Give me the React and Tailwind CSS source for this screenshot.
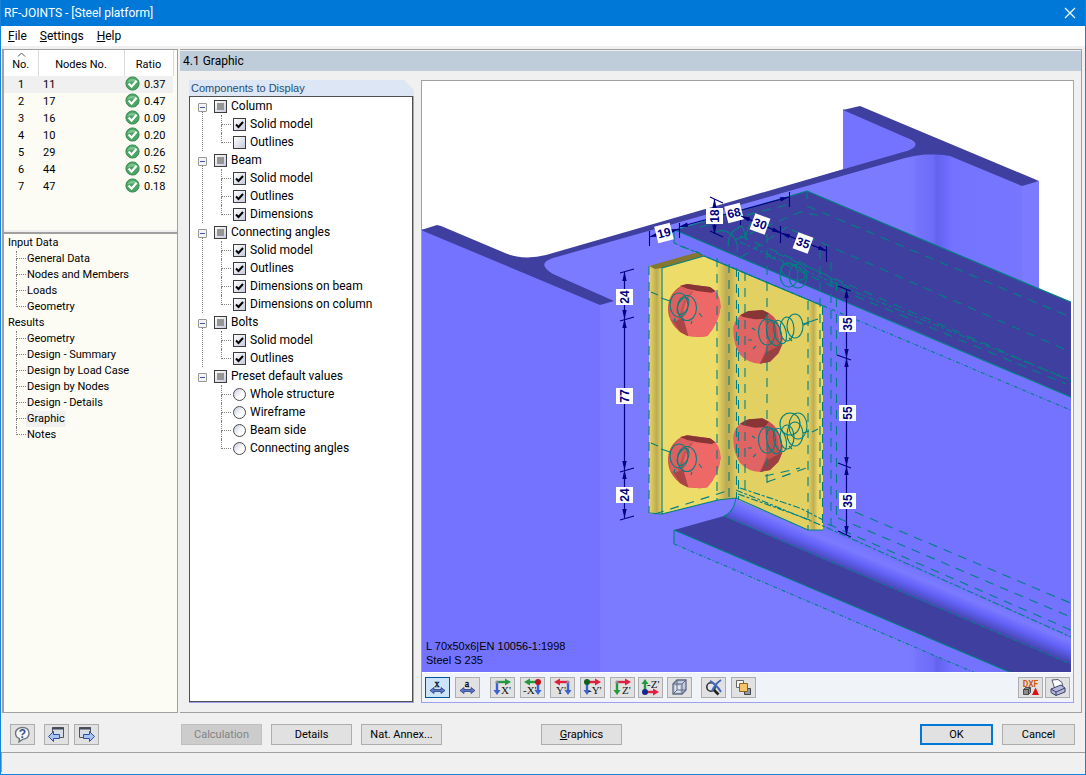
import React, { useState } from 'react';

const nodes = [
  { no: 1, node: 11, ratio: '0.37' },
  { no: 2, node: 17, ratio: '0.47' },
  { no: 3, node: 16, ratio: '0.09' },
  { no: 4, node: 10, ratio: '0.20' },
  { no: 5, node: 29, ratio: '0.26' },
  { no: 6, node: 44, ratio: '0.52' },
  { no: 7, node: 47, ratio: '0.18' },
];

const navigation = [
  { title: 'Input Data', items: ['General Data', 'Nodes and Members', 'Loads', 'Geometry'] },
  {
    title: 'Results',
    items: ['Geometry', 'Design - Summary', 'Design by Load Case', 'Design by Nodes', 'Design - Details', 'Graphic', 'Notes'],
  },
];

const components = [
  { title: 'Column', items: [['Solid model', true], ['Outlines', false]] },
  { title: 'Beam', items: [['Solid model', true], ['Outlines', true], ['Dimensions', true]] },
  {
    title: 'Connecting angles',
    items: [['Solid model', true], ['Outlines', true], ['Dimensions on beam', true], ['Dimensions on column', true]],
  },
  { title: 'Bolts', items: [['Solid model', true], ['Outlines', true]] },
  {
    title: 'Preset default values',
    radio: true,
    items: [['Whole structure'], ['Wireframe'], ['Beam side'], ['Connecting angles']],
  },
];

function OkMark() {
  return (
    <svg width="15" height="15" viewBox="0 0 15 15" className="block">
      <circle cx="7.5" cy="7.5" r="6.6" fill="#4aa564" stroke="#3c8a54" />
      <path d="M2.2 6.5a5.6 5.6 0 0 1 10.6 0q-5 -2 -10.6 0z" fill="#7cc48f" />
      <path d="M3.6 7.6l3 3.1 5-6" fill="none" stroke="#fff" strokeWidth="2.2" />
    </svg>
  );
}

function NodeTable() {
  return (
    <div className="h-[180px] bg-[#fcfcf4]">
      <table className="w-[169px] table-fixed border-collapse text-[11px]">
        <colgroup>
          <col className="w-[34px]" />
          <col className="w-[86px]" />
          <col className="w-[49px]" />
        </colgroup>
        <thead>
          <tr className="h-[26px] bg-white">
            <th className="relative border-r border-[#dcdcdc] p-0 pt-1 text-center font-normal">
              <svg className="absolute top-[2px] left-[13px]" width="9" height="5" viewBox="0 0 9 5">
                <path d="M1 4.5l3.5-3.5L8 4.5" fill="none" stroke="#555" />
              </svg>
              No.
            </th>
            <th className="border-r border-[#dcdcdc] p-0 pt-1 text-center font-normal">Nodes No.</th>
            <th className="border-r border-[#dcdcdc] p-0 pt-1 text-center font-normal">Ratio</th>
          </tr>
        </thead>
        <tbody>
          {nodes.map((n) => (
            <tr key={n.no} className="h-[17px] leading-4 first:bg-[#f0f0f0]">
              <td className="p-0 pt-px text-center">{n.no}</td>
              <td className="p-0 pt-px pl-[5px]">{n.node}</td>
              <td className="p-0">
                <div className="flex gap-1 pl-px">
                  <OkMark />
                  <span className="pt-px">{n.ratio}</span>
                </div>
              </td>
            </tr>
          ))}
        </tbody>
      </table>
    </div>
  );
}

function Navigation() {
  const [active, setActive] = useState('Results/Graphic');
  return (
    <nav className="flex-1 border-t-2 border-[#a0a0a0] bg-[#fcfcf4] pt-px text-[11px] leading-4">
      {navigation.map((group) => (
        <div key={group.title}>
          <div className="pl-1">{group.title}</div>
          <ul>
            {group.items.map((item, i) => {
              const id = group.title + '/' + item;
              return (
                <li key={id} className="flex h-4 pl-3">
                  <Branch last={i === group.items.length - 1} half="h-2" />
                  <button
                    onClick={() => setActive(id)}
                    className={'px-px leading-4 ' + (active === id ? 'bg-[#f0f0f0]' : '')}
                  >
                    {item}
                  </button>
                </li>
              );
            })}
          </ul>
        </div>
      ))}
    </nav>
  );
}

// dotted connector in front of a tree entry
function Branch({ last, half }) {
  return (
    <span className="flex w-[10px] flex-col">
      <span className={'border-b border-l border-dotted border-[#808080] ' + half} />
      {!last && <span className="flex-1 border-l border-dotted border-[#808080]" />}
    </span>
  );
}

const boxClass =
  'col-start-1 row-start-1 size-[13px] appearance-none border border-[#3c3c3c] bg-linear-to-br from-white to-[#c6cbdc]';

function Option({ group, label, checked, radio }) {
  if (radio) {
    return (
      <label className="flex items-center gap-1">
        <input
          type="radio"
          name={group}
          className="size-[13px] appearance-none rounded-full border border-[#4a4a4a] bg-linear-to-br from-[#c6cbdc] to-white to-60% checked:border-4"
        />
        {label}
      </label>
    );
  }
  return (
    <label className="flex items-center gap-1">
      <span className="grid">
        <input type="checkbox" defaultChecked={checked} className={'peer ' + boxClass} />
        <svg
          className="pointer-events-none invisible col-start-1 row-start-1 peer-checked:visible"
          width="13"
          height="13"
          viewBox="0 0 13 13"
        >
          <path d="M3 6.5L5.5 9 10 4" fill="none" stroke="#000" strokeWidth="2" />
        </svg>
      </span>
      {label}
    </label>
  );
}

function ComponentGroup({ group, last }) {
  const [open, setOpen] = useState(true);
  return (
    <li className="flex">
      <div className="flex w-6 flex-col pl-2">
        <button
          aria-label={'Toggle ' + group.title}
          onClick={() => setOpen(!open)}
          className="mt-[6px] flex size-[9px] items-center justify-center rounded-[1px] border border-[#969696] bg-[#f4f4f4]"
        >
          <span className="h-px w-[5px] bg-[#3a56a8]" />
        </button>
        {!last && <span className="ml-1 flex-1 border-l border-dotted border-[#808080]" />}
      </div>
      <div>
        <label className="flex h-[18px] items-center gap-1">
          <span className="grid">
            <input type="checkbox" defaultChecked className={'peer ' + boxClass} />
            <span className="pointer-events-none invisible col-start-1 row-start-1 m-[3px] bg-[#969696] peer-checked:visible" />
          </span>
          {group.title}
        </label>
        {open && (
          <ul className="pl-[7px]">
            {group.items.map(([label, checked], i) => (
              <li key={label} className="flex h-[18px] gap-[2px]">
                <Branch last={i === group.items.length - 1} half="h-[10px]" />
                <Option group={group.title} label={label} checked={checked} radio={group.radio} />
              </li>
            ))}
          </ul>
        )}
      </div>
    </li>
  );
}

function ComponentsPanel() {
  return (
    <section className="flex w-[225px] shrink-0 flex-col">
      <h2 className="h-4 bg-[#dce6f4] pl-[2px] font-['Liberation_Sans',sans-serif] text-[11px] leading-4 text-[#1f4e79] [clip-path:polygon(0_0,calc(100%-10px)_0,100%_10px,100%_100%,0_100%)]">
        Components to Display
      </h2>
      <div className="flex flex-1 border-r border-b border-[#a0a0f0]">
        <ul className="flex-1 border border-[#505050] bg-white text-xs">
          {components.map((g, i) => (
            <ComponentGroup key={g.title} group={g} last={i === components.length - 1} />
          ))}
        </ul>
      </div>
    </section>
  );
}

function Arrow({ x, y, angle }) {
  return <path d="M0 0L-9 -2.2V2.2z" fill="#000080" transform={`translate(${x} ${y}) rotate(${angle})`} />;
}

// one dimension: line between two points, arrows at both ends, value on a white tag
function Dimension({ from, to, at, angle, value }) {
  const dir = (Math.atan2(to[1] - from[1], to[0] - from[0]) * 180) / Math.PI;
  return (
    <g>
      <path d={`M${from}L${to}`} stroke="#000080" strokeWidth="1.2" />
      <Arrow x={to[0]} y={to[1]} angle={dir} />
      <Arrow x={from[0]} y={from[1]} angle={dir + 180} />
      <g transform={`translate(${at}) rotate(${angle})`}>
        <rect x="-8" y="-8.5" width="16" height="17" fill="#fff" />
        <text
          y="4"
          textAnchor="middle"
          fill="#000080"
          fontFamily="'Liberation Sans', sans-serif"
          fontWeight="bold"
          fontSize="12"
        >
          {value}
        </text>
      </g>
    </g>
  );
}

const dimensions = [
  { from: [649, 237], to: [679, 229], at: [664, 233], angle: -14, value: 19 },
  { from: [679, 227], to: [789, 197], at: [734, 213], angle: -14, value: 68 },
  { from: [714.5, 199], to: [714.5, 234], at: [714.5, 216], angle: -90, value: 18 },
  { from: [741, 216], to: [781, 233], at: [760, 224], angle: 20, value: 30 },
  { from: [781, 233], to: [827, 251], at: [803, 243], angle: 20, value: 35 },
  { from: [624.5, 272], to: [624.5, 319], at: [624.5, 297], angle: -90, value: 24 },
  { from: [624.5, 319], to: [624.5, 470], at: [624.5, 396], angle: -90, value: 77 },
  { from: [624.5, 470], to: [624.5, 518], at: [624.5, 495], angle: -90, value: 24 },
  { from: [846.5, 289], to: [846.5, 358], at: [847.5, 324], angle: -90, value: 35 },
  { from: [846.5, 358], to: [846.5, 466], at: [847.5, 413], angle: -90, value: 55 },
  { from: [846.5, 466], to: [846.5, 535], at: [847.5, 501], angle: -90, value: 35 },
];

function LeftBolt() {
  return (
    <g>
      <path d="M204 352Q206 320 225 302 240 286 262 282L300 287 330 291Q356 306 362 350 356 400 322 438L300 441 262 438Q232 424 218 402 203 380 204 352z" fill="#c95353" />
      <path d="M245 290L262 286 278 300 250 335 232 392 212 388 206 345 226 306z" fill="#dd6060" />
      <path d="M262 297L335 306 347 303Q362 322 362 350 356 400 322 438L300 441 265 438Q248 408 250 375 250 335 280 305z" fill="#ee6868" />
      <path d="M240 287L262 282 300 287 330 291 347 303 335 308 292 303 262 296z" fill="#873535" />
      <path d="M222 395L250 385 265 438 240 426z" fill="#a94545" />
    </g>
  );
}

function RightBolt() {
  return (
    <g>
      <path d="M400 412Q404 384 435 366L485 360 508 370Q538 388 547 440 548 470 535 490L510 515 480 521Q445 520 420 494 398 462 400 412z" fill="#e06464" />
      <path d="M494 388L508 371Q538 388 547 440L547 462 535 490 510 515 480 521Q500 480 502 450z" fill="#c45050" />
      <path d="M497 488L547 462 535 490 510 515 480 521z" fill="#9a4040" />
      <path d="M420 376L445 363 488 360 507 370 494 387 465 388 430 381z" fill="#873535" />
      <path d="M518 382Q540 400 547 455L538 465Q536 420 518 382z" fill="#d96060" />
    </g>
  );
}

function JointModel() {
  return (
    <svg
      viewBox="422 81 650 591"
      preserveAspectRatio="xMinYMin slice"
      className="block min-h-0 w-full flex-1 bg-white"
      role="img"
      aria-label="Steel joint model"
    >
      <defs>
        <linearGradient id="columnFillet" gradientUnits="userSpaceOnUse" x1="905" y1="0" x2="1022" y2="0">
          <stop offset="0" stopColor="#7b7bff" />
          <stop offset=".07" stopColor="#7a7aff" />
          <stop offset=".1" stopColor="#7474ff" />
          <stop offset=".24" stopColor="#6c6cf8" />
          <stop offset=".27" stopColor="#6262ec" />
          <stop offset=".34" stopColor="#6a6afa" />
          <stop offset=".41" stopColor="#7373ff" />
          <stop offset="1" stopColor="#7676ff" />
        </linearGradient>
        <linearGradient id="beamFillet" gradientUnits="userSpaceOnUse" x1="820" y1="530" x2="810" y2="554">
          <stop offset="0" stopColor="#7676ff" />
          <stop offset=".25" stopColor="#7b7bff" />
          <stop offset=".6" stopColor="#6262f8" />
          <stop offset="1" stopColor="#4747b4" />
        </linearGradient>
        <linearGradient id="toe" gradientUnits="userSpaceOnUse" x1="649" y1="0" x2="663" y2="0">
          <stop offset="0" stopColor="#e8d666" />
          <stop offset=".55" stopColor="#bcab52" />
          <stop offset="1" stopColor="#eedc68" />
        </linearGradient>
        <linearGradient id="heel" gradientUnits="userSpaceOnUse" x1="716" y1="0" x2="737" y2="0">
          <stop offset="0" stopColor="#eedc68" />
          <stop offset=".5" stopColor="#bcab52" />
          <stop offset=".75" stopColor="#c9b758" />
          <stop offset="1" stopColor="#e0ce62" />
        </linearGradient>
        <linearGradient id="edge" gradientUnits="userSpaceOnUse" x1="808" y1="0" x2="824" y2="0">
          <stop offset="0" stopColor="#e2d063" />
          <stop offset=".35" stopColor="#bfae54" />
          <stop offset=".6" stopColor="#e8d666" />
          <stop offset="1" stopColor="#eedc68" />
        </linearGradient>
      </defs>

      {/* column */}
      <path d="M843 109L905 136 918 145 912 153 843 172z" fill="#7373ff" />
      <path d="M542 259L905 151 950 153 1022 184V690H542z" fill="#7b7bff" />
      <path d="M905 150H950L1022 184V300H905z" fill="url(#columnFillet)" />
      <path d="M1022 184L1039 181V310H1022z" fill="#7b7bff" />
      <path d="M422 229L600 304V690H422z" fill="#7373ff" />
      <path
        d="M421 230L437 225 441 226 505 253Q514 257 527 257.500Q537 257 546 255L740 199 903 152Q918 148 915 143Q912 140 905 137L843 110 860 106 1039 181 1022 186 950 156Q944 154.500 936 154.500H925Q916 155 905 158L740 205 553 258Q543 261 544.500 266Q546 270 553 274L614 301 600 305z"
        fill="#3f3fa0"
      />
      <path d="M905 600H1022V690H905z" fill="url(#columnFillet)" />

      {/* beam web and flanges */}
      <path d="M674 230L1080 401V642L823 535V306L674 243z" fill="#7373ff" />
      <path d="M675 230L807 191 1080 306V401L913 330 740 258z" fill="#3f3fa0" />
      <path d="M674 530L820 592 1050 690H1015L674 544z" fill="#7373ff" />
      <path d="M674 530L724 516 820 557 1080 667V690H1052L820 592z" fill="#3f3fa0" />
      <path d="M736 498L823 530 1080 641V668L820 558 724 516Q734 512 736 498z" fill="url(#beamFillet)" />

      {/* angle */}
      <path d="M649 266L703 256 736 270V498L718 500 662 514 649 513z" fill="#eedc68" />
      <path d="M731 268L823 306V530H808L736 499z" fill="#e2d063" />
      <path d="M649 267H663V514H649z" fill="url(#toe)" />
      <path d="M716 261L737 270V498L718 500H716z" fill="url(#heel)" />
      <path d="M808 300L823 306V530H808z" fill="url(#edge)" />
      <path d="M649 266L698 252 704 256 662 268 655 269z" fill="#857632" />

      <g transform="translate(600 190) scale(.3333)">
        <LeftBolt />
        <g transform="translate(0 454)">
          <LeftBolt />
        </g>
        <RightBolt />
        <g transform="translate(0 325)">
          <RightBolt />
        </g>
      </g>

      {/* outlines */}
      <g fill="none" stroke="#008080" strokeWidth="1.1">
        <path d="M675 230L807 191 1080 306M675 230L1080 401M674 530L1052 690M662 268L704 256 823 306M649 513L662 514 718 500 736 498 808 530H823M724 516Q734 512 736 498M674 530V544M674 230V243M662 268V514M807 191V199" />
        <path d="M674 243L1080 414M674 544L1015 690M724 516L1080 668" strokeDasharray="4 2 1 2" />
        <path
          d="M649 266V513M717 258V500M729 264V498M736.500 268V498M738.500 272V500M745 272V490M767 234V490M808 301V530M822.500 306V530M820 250V500M831 262V526M836.500 282V522"
          strokeDasharray="9 7"
        />
        <path
          d="M680 246L700 253M807 206L1080 321M792 230L820 242 1080 356M776 253L838 280 1080 385M768 256L836 288 1066 384M740 236L800 262 850 288M700 227L790 204M735 240L800 212 822 216M740 258L790 225M655 514L730 490M767 482L812 466M765 476L800 468M855 512L1080 607M838 518L1080 621M828 524L1080 634"
          strokeDasharray="9 7"
        />
        <path d="M736 490L823 526 1080 641M738 494L810 520M740 488L800 508 823 520" strokeDasharray="7 2 3 2" />
        <path d="M740 242L776 258 850 290 1080 384" strokeDasharray="6 2 3 3" />
        <path d="M651 292L658 295M661 298L670 301M651 443L658 446M661 449L670 452M803 324L818 319M812 432L818 429M728 247Q728 232 738 228Q744 222 745 238M716 232Q724 228 733 236Q739 244 737 252M746 240Q746 222 760 218" />
        {[0, 151].map((y) => (
          <g key={y}>
            <ellipse cx="679" cy={305 + y} rx="9" ry="12" />
            <ellipse cx="687" cy={308 + y} rx="9.500" ry="12.500" />
            <ellipse cx="683" cy={306 + y} rx="5" ry="9" transform={`rotate(25 683 ${306 + y})`} />
            <path d={`M699 ${313 + y}l3 4M692 ${321 + y}l-1 3M675 ${318 + y}l-1 4`} />
          </g>
        ))}
        {[0, 108].map((y) => (
          <g key={y}>
            <ellipse cx="767" cy={332 + y} rx="8.500" ry="13" />
            <ellipse cx="774" cy={333 + y} rx="7" ry="13" transform={`rotate(-15 774 ${333 + y})`} />
            <ellipse cx="780" cy={332 + y} rx="6" ry="12" transform={`rotate(-15 780 ${332 + y})`} />
            <ellipse cx="787" cy={329 + y} rx="7" ry="12" />
            <ellipse cx="795" cy={326 + y} rx="8" ry="12" />
            <path d={`M748 ${340 + y}h4M752 ${328 + y}l3 2M753 ${349 + y}l3 -3M789 ${338 + y}l3 3M803 ${325 + y}l6 -2`} />
          </g>
        ))}
        <ellipse cx="789" cy="275" rx="9" ry="12" />
        <ellipse cx="798" cy="276" rx="9" ry="12" />
        <ellipse cx="793" cy="272" rx="13" ry="7" transform="rotate(24 793 272)" />
        <ellipse cx="790" cy="424" rx="10" ry="11" />
        <ellipse cx="798" cy="426" rx="9" ry="13" />
      </g>

      {/* dimensions */}
      <path
        d="M649.500 231V246M679.500 223V238M789.500 192V207M740.500 218V225M780.500 226V243M826.500 246V262M710 197L723 203M710 231L723 237M620 273L634 269M620 321L634 317M620 472L634 468M620 520L634 516M838 286L851 291M837 355L851 360M838 463L851 468M838 531L851 537"
        fill="none"
        stroke="#000080"
        strokeWidth="1.100"
      />
      {dimensions.map((d, i) => (
        <Dimension key={i} {...d} />
      ))}
      <g fontFamily="'Liberation Sans', sans-serif" fontSize="11">
        <text x="426" y="650">L 70x50x6|EN 10056-1:1998</text>
        <text x="426" y="664">Steel S 235</text>
      </g>
    </svg>
  );
}

const RED = '#e0203c';
const GREEN = '#1f9a3c';
const BLUE = '#3a62d0';

// pair of axes: h = horizontal arrow, v = vertical arrow, starting at the corner x, y
function AxisIcon({ x, y, h, v, hColor, vColor, dot, label, labelX, labelY }) {
  return (
    <svg width="19" height="19" viewBox="0 -1 19 19">
      <path d={`M${x} ${y}h${h * 8}`} stroke={hColor} strokeWidth="2.4" />
      <path d={`M${x + h * 8} ${y - 3.5}v7l${h * 6} -3.5z`} fill={hColor} />
      <path d={`M${x} ${y}v${v * 8}`} stroke={vColor} strokeWidth="2.4" />
      <path d={`M${x - 3.5} ${y + v * 8}h7l-3.5 ${v * 5}z`} fill={vColor} />
      <circle cx={x} cy={y} r={dot ? 3 : 1.6} fill={dot || '#8a8aa0'} />
      <text x={labelX} y={labelY} fontFamily="'Liberation Serif', serif" fontSize="11" fill="#111">
        {label}
      </text>
    </svg>
  );
}

function DimIcon({ letter }) {
  return (
    <svg width="19" height="19" viewBox="0 0 19 19">
      <text x="9" y="9" textAnchor="middle" fontFamily="'Liberation Serif', serif" fontSize="10" stroke="#000" strokeWidth=".3">
        {letter}
      </text>
      <path d="M2 12.500l4-3v2h7v-2l4 3-4 3v-2H6v2z" fill="#5a78c8" stroke="#2c4080" strokeWidth=".8" />
    </svg>
  );
}

const views = [
  { label: "X'", x: 4, y: 3, h: 1, v: 1, hColor: GREEN, vColor: BLUE, labelX: 8, labelY: 15 },
  { label: "-X'", x: 15, y: 3, h: -1, v: 1, hColor: GREEN, vColor: BLUE, dot: '#c01020', labelX: 0, labelY: 15 },
  { label: "Y'", x: 15, y: 3, h: -1, v: 1, hColor: RED, vColor: BLUE, labelX: 3, labelY: 15 },
  { label: "-Y'", x: 4, y: 3, h: 1, v: 1, hColor: RED, vColor: BLUE, dot: '#0c6020', labelX: 5, labelY: 15 },
  { label: "Z'", x: 4, y: 3, h: 1, v: 1, hColor: RED, vColor: GREEN, labelX: 9, labelY: 15 },
];

const bottomView = { label: "-Z'", x: 4, y: 13, h: 1, v: -1, hColor: RED, vColor: GREEN, dot: '#102890', labelX: 6, labelY: 9 };

function ToolButton({ label, pressed, children }) {
  return (
    <button
      aria-label={label}
      className={
        'flex h-[21px] w-[25px] items-center justify-center border ' +
        (pressed ? 'border-[#005499] bg-[#cce4f7]' : 'border-[#adadad] bg-[#e1e1e1]')
      }
    >
      {children}
    </button>
  );
}

function ViewerToolbar() {
  return (
    <div className="flex h-[30px] items-center border-t border-white bg-[#f0f4f9] px-[3px]">
      <div className="flex gap-[5px]">
        <ToolButton label="Show dimensions" pressed>
          <DimIcon letter="x" />
        </ToolButton>
        <ToolButton label="Show names">
          <DimIcon letter="a" />
        </ToolButton>
      </div>
      <div className="ml-[10px] flex gap-[5px]">
        {views.map((v) => (
          <ToolButton key={v.label} label={'View ' + v.label}>
            <AxisIcon {...v} />
          </ToolButton>
        ))}
      </div>
      <div className="ml-[3px] flex gap-1">
        <ToolButton label="View -Z'">
          <AxisIcon {...bottomView} />
        </ToolButton>
        <ToolButton label="Isometric view">
          <svg width="19" height="17" viewBox="0 0 19 17">
            <path d="M3 5l4-4h9v10l-4 4H3z" fill="#c4ccdc" stroke="#5c6884" strokeWidth="1.300" />
            <path d="M5 7h5v6H5z" fill="#e4e8f0" />
            <path d="M3 5h9v10M12 5l4-4M7 1v10h9M3 15l4-4" fill="none" stroke="#5c6884" />
          </svg>
        </ToolButton>
      </div>
      <div className="ml-[9px] flex gap-[5px]">
        <ToolButton label="Zoom off">
          <svg width="19" height="17" viewBox="0 0 19 17">
            <circle cx="7" cy="8" r="4.200" fill="#dfe6ee" stroke="#333" strokeWidth="1.600" />
            <path d="M10 11l4.500 4.500" stroke="#222" strokeWidth="2.600" />
            <path d="M6 2Q12 5 17 13M17 1Q11 5 8 12" fill="none" stroke="#4468b8" strokeWidth="2" />
          </svg>
        </ToolButton>
        <ToolButton label="Layers">
          <svg width="19" height="17" viewBox="0 0 19 17">
            <path d="M2.500 1.500h7v7h-7z" fill="#f4f4f4" stroke="#666" />
            <path d="M10.500 9.500h6v6h-6z" fill="#8a96b4" stroke="#444" />
            <path d="M5.500 4.500h8v8h-8z" fill="#f4c468" stroke="#8a6420" />
          </svg>
        </ToolButton>
      </div>
      <div className="ml-auto flex gap-[2px]">
        <ToolButton label="Export DXF">
          <svg width="19" height="17" viewBox="0 0 19 17">
            <text x="9.500" y="7.500" textAnchor="middle" fontFamily="Roboto, sans-serif" fontWeight="bold" fontSize="8.500" fill="#d05a10">
              DXF
            </text>
            <path d="M2.500 10.500l2-2h5v5l-2 2h-5z" fill="#8c8c8c" stroke="#505050" />
            <path d="M2.500 10.500h5v5M7.500 10.500l2-2" fill="none" stroke="#404040" />
            <path d="M11 16l3.500-7.500L18 16z" fill="#e01010" />
          </svg>
        </ToolButton>
        <ToolButton label="Print">
          <svg width="19" height="17" viewBox="0 0 19 17">
            <path d="M4 1l6-.5 4 3 1 5-8 2z" fill="#fff" stroke="#555a70" />
            <path d="M3 10l10-4 4 3v4l-9 3.500-5-3z" fill="#b4b8dc" stroke="#3c4068" />
            <path d="M3 10l5 3 9-4M8 13v3.500" fill="none" stroke="#3c4068" />
          </svg>
        </ToolButton>
      </div>
    </div>
  );
}

function Viewer() {
  return (
    <section className="flex min-w-0 flex-1 flex-col border border-t-[#a0a0a0] border-r-[#a0a0f0] border-b-[#a0a0f0] border-l-[#a0a0a0] bg-white">
      <div className="flex min-h-0 flex-1 flex-col pr-[2px]">
        <JointModel />
      </div>
      <ViewerToolbar />
    </section>
  );
}

function ArrowWindow({ back }) {
  return (
    <svg width="19" height="17" viewBox="0 0 19 17">
      <path d={back ? 'M5.500 1.500h11v10h-11z' : 'M2.500 1.500h11v10h-11z'} fill="#d8dce4" stroke="#555" />
      <path d={back ? 'M5 2.500h12' : 'M2 2.500h12'} stroke="#444a5c" strokeWidth="2" />
      <path
        d={back ? 'M1.500 10.500l5-5v3h6v4h-6v3z' : 'M17.500 10.500l-5-5v3h-6v4h6v3z'}
        fill="#a8c4f0"
        stroke="#2c4fa0"
      />
    </svg>
  );
}

const wideButton = 'h-[21px] w-[81px] border border-[#adadad] bg-[#e1e1e1] pt-px';

function Footer() {
  return (
    <footer className="flex h-[39px] items-center pt-1 pr-[10px] pl-[9px] text-[11px]">
      <div className="flex w-[171px]">
        <ToolButton label="Help">
          <svg width="19" height="17" viewBox="0 0 19 17">
            <path d="M9.500 1.500c4 0 6.500 2.300 6.500 5.800 0 3.400-2.500 5.700-6 5.800L6 15.800l.5-3.200C4 11.800 2.500 10 2.500 7.300c0-3.500 3-5.800 7-5.800z" fill="#f4f6fa" stroke="#70757f" strokeWidth="1.400" />
            <text x="9.500" y="11.500" textAnchor="middle" fontFamily="'Liberation Sans', sans-serif" fontWeight="bold" fontSize="12" fill="#34508c">
              ?
            </text>
          </svg>
        </ToolButton>
        <div className="ml-[9px] flex gap-[5px]">
          <ToolButton label="Previous">
            <ArrowWindow back />
          </ToolButton>
          <ToolButton label="Next">
            <ArrowWindow />
          </ToolButton>
        </div>
      </div>
      <div className="flex gap-[9px]">
        <button disabled className="h-[21px] w-[81px] border border-[#bfbfbf] bg-[#cccccc] pt-px text-[#838383]">
          Calculation
        </button>
        <button className={wideButton}>Details</button>
        <button className={wideButton}>Nat. Annex...</button>
      </div>
      <button className={'ml-[99px] ' + wideButton}>
        <u>G</u>raphics
      </button>
      <div className="ml-auto flex gap-[9px]">
        <button className="h-[21px] w-[73px] border-2 border-[#0078d7] bg-[#e1e1e1] pt-px">OK</button>
        <button className="h-[21px] w-[73px] border border-[#adadad] bg-[#e1e1e1] pt-px">Cancel</button>
      </div>
    </footer>
  );
}

export default function App() {
  return (
    <div className="flex min-h-screen flex-col border border-t-0 border-[#1883d7] bg-[#f0f0f0] font-[Roboto,sans-serif] text-black">
      <header className="flex h-[26px] items-center justify-between bg-[#0078d7] pr-[9px] pl-[3px] text-xs text-white">
        <h1>RF-JOINTS - [Steel platform]</h1>
        <button aria-label="Close">
          <svg width="12" height="12" viewBox="0 0 12 12">
            <path d="M1 1l10 10M11 1L1 11" stroke="#fff" strokeWidth="1.200" />
          </svg>
        </button>
      </header>
      <nav className="flex h-5 items-center gap-[13px] bg-white pl-[7px] text-xs">
        <a href="#file"><u>F</u>ile</a>
        <a href="#settings"><u>S</u>ettings</a>
        <a href="#help"><u>H</u>elp</a>
      </nav>

      <div className="mt-[3px] flex flex-1 gap-[2px] pr-[3px] pl-px">
        <aside className="flex w-44 shrink-0 flex-col gap-[2px] border border-l-2 border-[#a0a0a0]">
          <NodeTable />
          <Navigation />
        </aside>
        <main className="flex min-w-0 flex-1 flex-col border-t border-r border-b border-[#a0a0a0]">
          <h2 className="mt-px h-5 bg-[#bfcddb] pl-[3px] text-xs leading-5">4.1 Graphic</h2>
          <div className="flex flex-1 gap-[7px] pt-[9px] pr-[7px] pb-[9px] pl-[9px]">
            <ComponentsPanel />
            <Viewer />
          </div>
        </main>
      </div>

      <Footer />
      <div className="mb-[2px] h-[20px] border-t border-l border-[#a0a0a0]" />
    </div>
  );
}
